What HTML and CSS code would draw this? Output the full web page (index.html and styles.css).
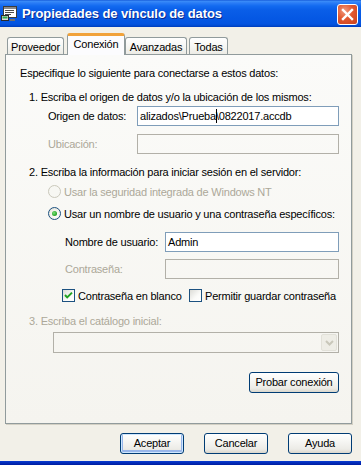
FILE: index.html
```html
<!DOCTYPE html>
<html lang="es">
<head>
<meta charset="utf-8">
<title>Propiedades de vínculo de datos</title>
<link rel="stylesheet" href="styles.css">
</head>
<body>
<div class="window">
  <div class="titlebar">
    <svg class="app-icon" width="17" height="16" viewBox="0 0 17 16">
      <rect x="2.5" y="0.5" width="13" height="11" fill="#fff" stroke="#3c3c3c"/>
      <rect x="3" y="1" width="12" height="2" fill="#8a8a8a"/>
      <rect x="4" y="4" width="9" height="1" fill="#4b4b4b"/>
      <rect x="4" y="6" width="9" height="1" fill="#4b4b4b"/>
      <rect x="4" y="8" width="6" height="1" fill="#4b4b4b"/>
      <rect x="0.5" y="9.5" width="7" height="5" fill="#d9d9d9" stroke="#2b2b2b"/>
      <rect x="1.5" y="10.5" width="5" height="2" fill="#2fa84a"/>
      <rect x="9" y="13" width="5" height="2" fill="#6f6f6f"/>
    </svg>
    <span class="title">Propiedades de vínculo de datos</span>
    <div class="close-btn">
      <svg width="13" height="13" viewBox="0 0 13 13">
        <path d="M2 2 L11 11 M11 2 L2 11" stroke="#fff" stroke-width="2.4" stroke-linecap="square"/>
      </svg>
    </div>
  </div>

  <div class="client">
    <div class="tabs">
      <div class="tab tab-proveedor">Proveedor</div>
      <div class="tab tab-active">Conexión</div>
      <div class="tab tab-avanzadas">Avanzadas</div>
      <div class="tab tab-todas">Todas</div>
    </div>

    <div class="panel">
      <div class="intro">Especifique lo siguiente para conectarse a estos datos:</div>

      <div class="heading h1">1. Escriba el origen de datos y/o la ubicación de los mismos:</div>
      <div class="field-row row-origen">
        <span class="label label-origen">Origen de datos:</span>
        <div class="edit">alizados\Prueba<span class="caret"></span>\0822017.accdb</div>
      </div>
      <div class="field-row row-ubic">
        <span class="label label-origen disabled">Ubicación:</span>
        <div class="edit edit-disabled"></div>
      </div>

      <div class="heading h2">2. Escriba la información para iniciar sesión en el servidor:</div>
      <div class="option-row opt1">
        <span class="radio radio-disabled"></span>
        <span class="disabled">Usar la seguridad integrada de Windows NT</span>
      </div>
      <div class="option-row opt2">
        <span class="radio radio-checked"><span class="dot"></span></span>
        <span>Usar un nombre de usuario y una contraseña específicos:</span>
      </div>
      <div class="field-row row-user">
        <span class="label label-user">Nombre de usuario:</span>
        <div class="edit">Admin</div>
      </div>
      <div class="field-row row-pass">
        <span class="label label-user disabled">Contraseña:</span>
        <div class="edit edit-disabled"></div>
      </div>
      <div class="check-row">
        <span class="check-item check-first">
          <span class="checkbox">
            <svg width="11" height="11" viewBox="0 0 11 11"><path d="M2 5 L4.2 7.4 L9 2.6" fill="none" stroke="#21a121" stroke-width="2"/></svg>
          </span>
          <span>Contraseña en blanco</span>
        </span>
        <span class="check-item">
          <span class="checkbox"></span>
          <span>Permitir guardar contraseña</span>
        </span>
      </div>

      <div class="heading h3 disabled">3. Escriba el catálogo inicial:</div>
      <div class="combo">
        <div class="combo-btn">
          <svg width="9" height="6" viewBox="0 0 9 6"><path d="M1 1 L4.5 4.5 L8 1" fill="none" stroke="#c9c7ba" stroke-width="2"/></svg>
        </div>
      </div>

      <div class="test-row">
        <div class="button btn-test">Probar conexión</div>
      </div>
    </div>

    <div class="buttons">
      <div class="button btn-default">Aceptar</div>
      <div class="button">Cancelar</div>
      <div class="button">Ayuda</div>
    </div>
  </div>
  <div class="frame-bottom"></div>
</div>
</body>
</html>
```

FILE: styles.css
```css
* { box-sizing: border-box; }

html, body {
  margin: 0;
  padding: 0;
}

body {
  font-family: "Liberation Sans", Arial, sans-serif;
  font-size: 11px;
  letter-spacing: -0.2px;
  color: #000;
  background: #f2f0e8;
  white-space: nowrap;
}

.window {
  width: 361px;
  height: 465px;
  display: flex;
  flex-direction: column;
  background: #f2f0e8;
  overflow: hidden;
}

/* Title bar */
.titlebar {
  flex: none;
  height: 27px;
  display: flex;
  align-items: center;
  background: linear-gradient(to bottom,
    #0a4cd2 0px, #3d8ef8 1px, #2a7cf6 3px, #126af0 6px,
    #0a5ee8 10px, #0558e4 18px, #0454e0 24px, #0048cc 26px, #003ab8 27px);
  color: #fff;
}

.app-icon {
  margin-left: 1px;
  margin-top: 1px;
  flex: none;
}

.title {
  margin-left: 4px;
  font-family: "Liberation Sans", Arial, sans-serif;
  font-weight: bold;
  font-size: 13px;
  letter-spacing: -0.1px;
  text-shadow: 1px 1px 0 #0b2a8f;
}

.close-btn {
  margin-left: auto;
  margin-right: 3px;
  margin-top: 2px;
  width: 21px;
  height: 21px;
  border: 1px solid #fff;
  border-radius: 3px;
  background: radial-gradient(circle at 35% 30%, #f09a80 0%, #e2582f 45%, #c8401e 100%);
  display: flex;
  align-items: center;
  justify-content: center;
}

/* Client area */
.client {
  flex: 1;
  display: flex;
  flex-direction: column;
  padding: 0 9px 0 5px;
}

.tabs {
  flex: none;
  height: 27px;
  display: flex;
  align-items: flex-end;
  position: relative;
  z-index: 2;
}

.tab {
  height: 17px;
  border: 1px solid #919b9c;
  border-bottom: none;
  border-radius: 3px 3px 0 0;
  background: linear-gradient(to bottom, #ffffff 0%, #f7f7f4 50%, #ecebe5 100%);
  display: flex;
  align-items: center;
  justify-content: center;
  padding-top: 1px;
}

.tab-proveedor { margin-left: 2px; width: 57px; }
.tab-active {
  margin-left: 3px;
  width: 58px;
  height: 22px;
  margin-bottom: -1px;
  background: #fcfcfe;
  border-top: 3px solid #f1a23a;
  padding-top: 0;
  padding-bottom: 3px;
}
.tab-avanzadas { width: 62px; }
.tab-todas { margin-left: 2px; width: 39px; }

.panel {
  flex: none;
  height: 370px;
  border: 1px solid #919b9c;
  background: linear-gradient(to bottom, #fbfbf9 0%, #f5f4ef 100%);
  box-shadow: 1px 1px 0 #d3d0c4;
  padding: 12px 12px 0 14px;
  display: flex;
  flex-direction: column;
  position: relative;
  z-index: 1;
}

.intro {
  line-height: 13px;
}

.heading {
  line-height: 13px;
  padding-left: 9px;
}

.h1 { margin-top: 11px; }
.h2 { margin-top: 12px; }
.h3 { margin-top: 13px; }

.disabled { color: #aca899; }

.field-row {
  display: flex;
  align-items: center;
  height: 20px;
}

.row-origen { margin-top: 2px; padding-left: 28px; }
.row-ubic { margin-top: 8px; padding-left: 28px; }
.row-user { margin-top: 12px; padding-left: 45px; }
.row-pass { margin-top: 7px; padding-left: 45px; }

.label { flex: none; }
.label-origen { width: 89px; }
.label-user { width: 100px; }

.edit {
  flex: 1;
  height: 20px;
  border: 1px solid #7f9db9;
  background: #fff;
  padding-left: 2px;
  line-height: 18px;
  overflow: hidden;
}

.edit-disabled {
  border-color: #b2b0a8;
  background: transparent;
}

.caret {
  display: inline-block;
  width: 0;
  height: 14px;
  border-left: 1px solid #000;
  vertical-align: -3px;
  margin-right: -1px;
}

.option-row {
  display: flex;
  align-items: center;
  height: 13px;
  padding-left: 28px;
  gap: 3px;
}

.opt1 { margin-top: 6px; }
.opt2 { margin-top: 9px; }

.radio {
  flex: none;
  width: 13px;
  height: 13px;
  border-radius: 50%;
  display: flex;
  align-items: center;
  justify-content: center;
}

.radio-disabled {
  border: 1px solid #cac8bb;
  background: #f7f7f3;
}

.radio-checked {
  border: 1px solid #1c5180;
  background: radial-gradient(circle at 60% 65%, #ffffff 0%, #f0efe8 60%, #d9d8cf 100%);
}

.dot {
  width: 5px;
  height: 5px;
  border-radius: 50%;
  background: radial-gradient(circle at 40% 40%, #7be27b 0%, #21a121 70%, #137d13 100%);
}

.check-row {
  display: flex;
  align-items: center;
  height: 13px;
  margin-top: 10px;
  padding-left: 42px;
}

.check-item {
  display: flex;
  align-items: center;
  gap: 3px;
}

.check-first { width: 127px; }

.checkbox {
  flex: none;
  width: 13px;
  height: 13px;
  border: 1px solid #1c5180;
  background: linear-gradient(135deg, #dcdcd7 0%, #fbfbf9 60%, #ffffff 100%);
  display: flex;
  align-items: center;
  justify-content: center;
}

.combo {
  margin-top: 4px;
  margin-left: 33px;
  height: 21px;
  border: 1px solid #b2b0a8;
  display: flex;
  justify-content: flex-end;
  padding: 1px;
}

.combo-btn {
  width: 16px;
  height: 17px;
  border-radius: 2px;
  background: #eeede6;
  border: 1px solid #e2e1d9;
  display: flex;
  align-items: center;
  justify-content: center;
}

.test-row {
  margin-top: 19px;
  display: flex;
  justify-content: flex-end;
}

.button {
  height: 21px;
  width: 64px;
  border: 1px solid #003c74;
  border-radius: 3px;
  background: linear-gradient(to bottom, #ffffff 0%, #f6f6f3 40%, #ecebe6 80%, #d9d6cc 100%);
  display: flex;
  align-items: center;
  justify-content: center;
  padding-bottom: 1px;
}

.btn-test { width: 90px; }

.btn-default {
  box-shadow: inset 0 0 0 1px #cee7ff, inset 0 -1px 0 2px #98b6ea;
}

.buttons {
  margin-top: 9px;
  display: flex;
  justify-content: flex-end;
  gap: 20px;
}

.frame-bottom {
  flex: none;
  height: 4px;
  margin-top: auto;
  background: linear-gradient(to bottom, #0a3bd0 0%, #002ab8 50%, #001c9e 100%);
}
```
